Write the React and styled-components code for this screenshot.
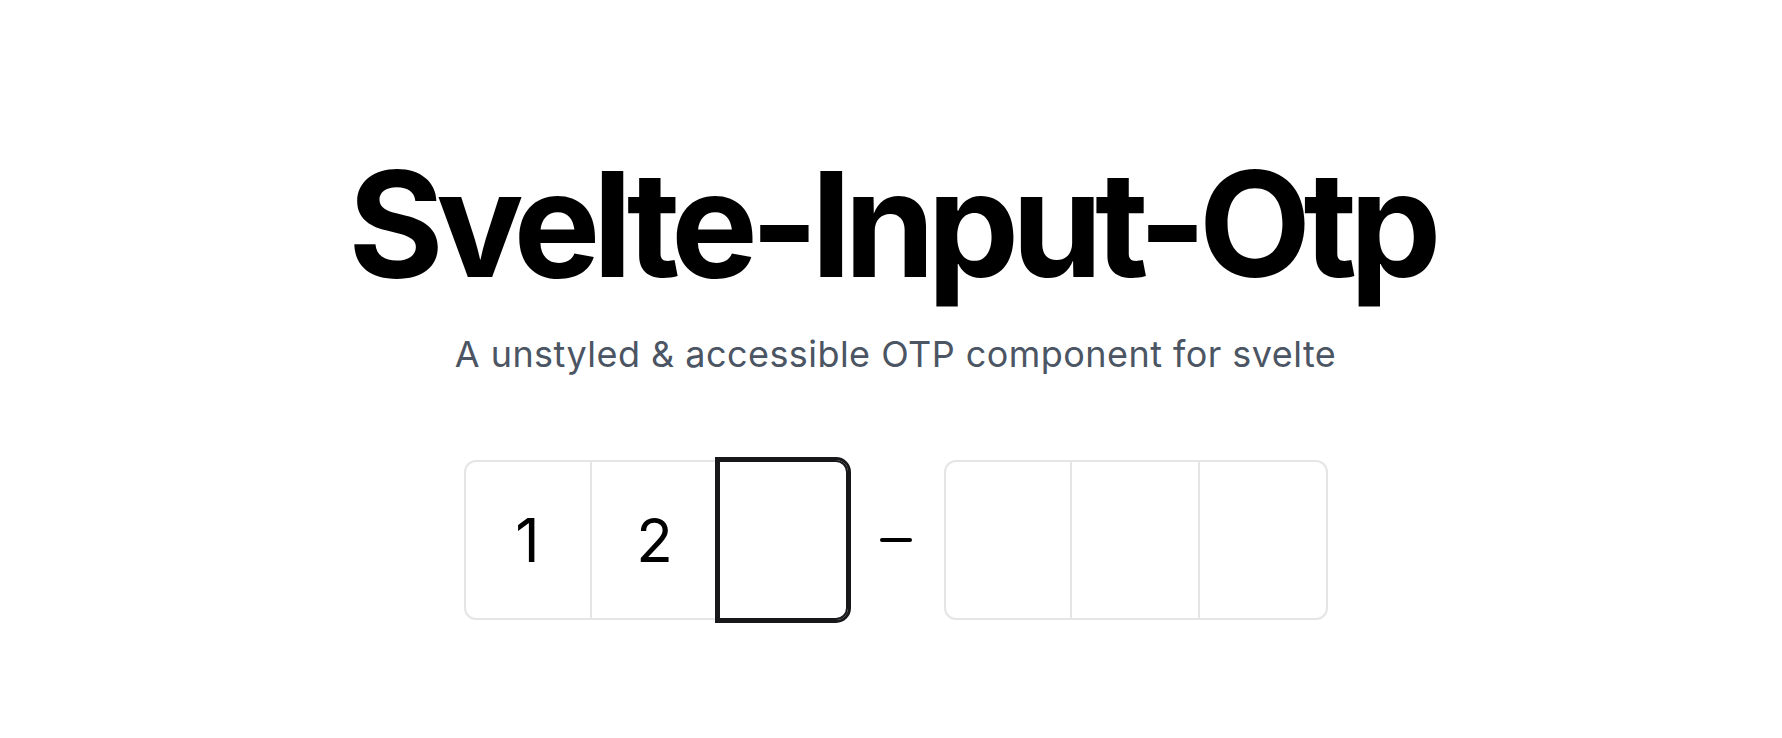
import React from "react";
import styled, { createGlobalStyle } from "styled-components";

const Global = createGlobalStyle`
  html, body { margin: 0; padding: 0; background: #ffffff; }
  body { font-family: Inter, "Noto Sans", "Liberation Sans", sans-serif; color: #000; }
  * { box-sizing: border-box; }
`;

const Main = styled.main`
  display: flex;
  flex-direction: column;
  align-items: center;
  padding: 151px 0 0 9px;
  min-height: 738px;
`;

const Title = styled.h1`
  margin: 0 9px 0 0;
  font-size: 146px;
  line-height: 146px;
  font-weight: 700;
  letter-spacing: -7.7px;
  color: #000;
`;

const Subtitle = styled.p`
  margin: 37px 0 0;
  font-size: 36px;
  line-height: 40px;
  font-weight: 400;
  letter-spacing: 0.45px;
  color: #4b5563;
`;

const OtpRow = styled.div`
  margin-top: 86px;
  display: flex;
  align-items: center;
  gap: 32px;
`;

const Group = styled.div`
  display: flex;
  align-items: center;
`;

const Slot = styled.div`
  position: relative;
  width: 128px;
  height: 160px;
  display: flex;
  align-items: center;
  justify-content: center;
  border-top: 2px solid #e5e5e5;
  border-bottom: 2px solid #e5e5e5;
  border-right: 2px solid #e5e5e5;
  font-size: 60px;
  line-height: 1;
  font-weight: 400;
  color: #000;
  &:first-child {
    border-left: 2px solid #e5e5e5;
    border-top-left-radius: 12px;
    border-bottom-left-radius: 12px;
  }
  &:last-child {
    border-top-right-radius: 12px;
    border-bottom-right-radius: 12px;
  }
  ${(p) =>
    p.$active &&
    `
    z-index: 1;
    border-color: #18181b;
    border-left: 2px solid #18181b;
    margin-left: -2px;
    width: 130px;
    box-shadow: 0 0 0 3px #18181b;
  `}
`;

const Separator = styled.div`
  width: 32px;
  height: 4px;
  border-radius: 2px;
  background: #000;
`;

export default function App() {
  const first = ["1", "2", ""];
  const second = ["", "", ""];
  return (
    <>
      <Global />
      <Main>
        <Title>Svelte-Input-Otp</Title>
        <Subtitle>A unstyled &amp; accessible OTP component for svelte</Subtitle>
        <OtpRow>
          <Group>
            {first.map((c, i) => (
              <Slot key={i} $active={i === 2}>
                {c}
              </Slot>
            ))}
          </Group>
          <Separator />
          <Group>
            {second.map((c, i) => (
              <Slot key={i}>{c}</Slot>
            ))}
          </Group>
        </OtpRow>
      </Main>
    </>
  );
}
